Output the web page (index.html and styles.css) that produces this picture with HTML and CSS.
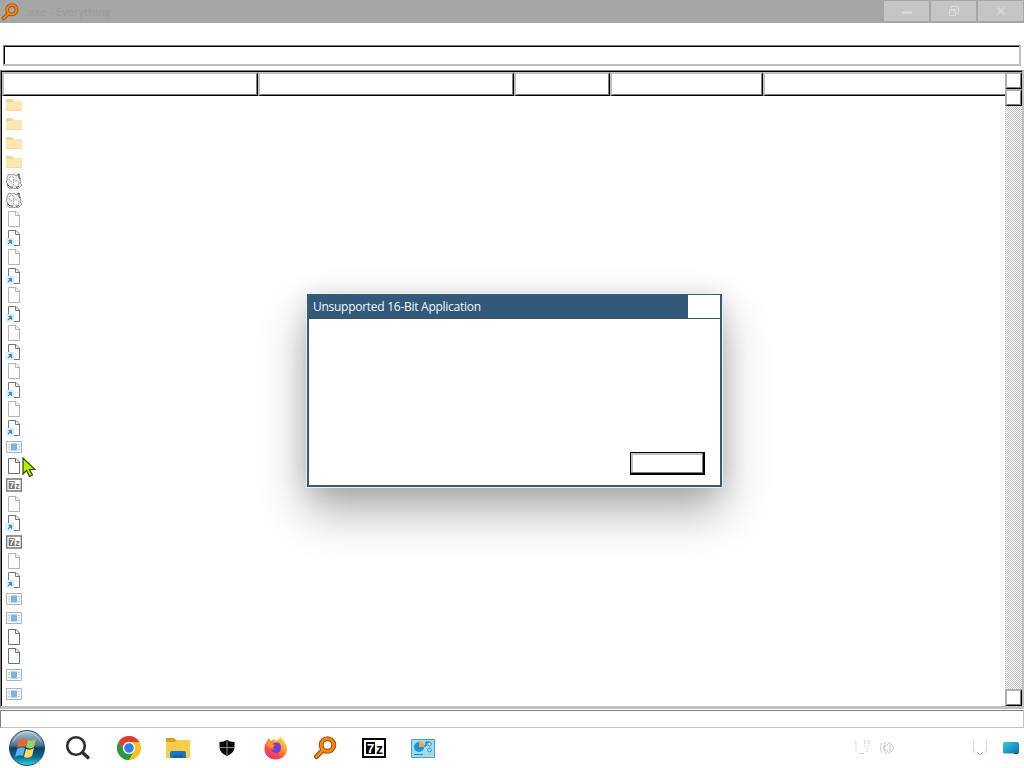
FILE: index.html
```
<!DOCTYPE html>
<html lang="en">
<head>
    <meta charset="UTF-8">
    <title>Everything</title>
    <link rel="stylesheet" href="styles.css">
</head>
<body>
    <svg class="defs" width="0" height="0">
        <defs>
            <linearGradient id="orb-fill" x1="0" y1="0" x2="0" y2="1">
                <stop offset="0" stop-color="#b5c5cf"/>
                <stop offset="0.42" stop-color="#4b7895"/>
                <stop offset="0.5" stop-color="#123e62"/>
                <stop offset="0.75" stop-color="#08698f"/>
                <stop offset="1" stop-color="#35d5ea"/>
            </linearGradient>
            <linearGradient id="fox-fill" x1="0.9" y1="0" x2="0.2" y2="1">
                <stop offset="0" stop-color="#fff04a"/>
                <stop offset="0.4" stop-color="#ff9a2c"/>
                <stop offset="0.7" stop-color="#ff4c45"/>
                <stop offset="1" stop-color="#e9288c"/>
            </linearGradient>
            <linearGradient id="desk-fill" x1="0" y1="0" x2="1" y2="1">
                <stop offset="0" stop-color="#38c8df"/>
                <stop offset="1" stop-color="#0870b4"/>
            </linearGradient>
            <symbol id="folder" viewBox="0 0 16 16">
                <path d="M0 2h6l2 2h7v3H0z" fill="#ecd9a0"/>
                <path d="M0 5h6l2-1h8v10H0z" fill="#fbe8b0"/>
                <path d="M0 13.500h16" stroke="#f0dc9f"/>
            </symbol>
            <symbol id="gears" viewBox="0 0 16 16">
                <path d="M1 4l2-3 3 1 2-1 2 2 3-2v4l2 3-1 2 2 2-3 3-3 1-3-1-3 1-3-3 1-2-2-2 1-2z" fill="#eee" stroke="#999"/>
                <circle cx="5.500" cy="6" r="2.500" fill="#fff" stroke="#999" stroke-dasharray="2 1"/>
                <circle cx="10" cy="10.500" r="2.800" fill="#fff" stroke="#999" stroke-dasharray="2 1"/>
                <path d="M11 2l2-1v4l2 1M1 11l3 3h3M13 13l-3 2" fill="none" stroke="#555"/>
            </symbol>
            <symbol id="page" viewBox="0 0 16 16">
                <path d="M2.500 .5h7.500l3.500 3.500v11.500h-11z" fill="#fdfdfd" stroke="currentColor"/>
                <path d="M9.500 .5v4h4" fill="none" stroke="currentColor"/>
            </symbol>
            <symbol id="link" viewBox="0 0 16 16">
                <path d="M2.500 8V.5h7.500l3.500 3.500v11.500H8" fill="none" stroke="#777"/>
                <path d="M9.500 .5v4h4" fill="none" stroke="#777"/>
                <path d="M.5 8.500h7v7h-7z" fill="#f2f9ff" stroke="#d4eafa"/>
                <path d="M2 14l3-3M2.500 10.500h3V14" fill="none" stroke="#3b86c4" stroke-width="1.300"/>
            </symbol>
            <symbol id="exe" viewBox="0 0 16 16">
                <path d="M.5 2.500h15v11H.5z" fill="#f6fafc" stroke="#a9b4bb"/>
                <path d="M5 4.500h6v7H5z" fill="#7fb3da"/>
                <path d="M2 5.500h2M2 8h2M2 10.500h2M12 5.500h2M12 8h2M12 10.500h2" stroke="#b1cddd"/>
            </symbol>
            <symbol id="sevenzip" viewBox="0 0 24 20">
                <path d="M1 1h22v18H1z" fill="#fff" stroke="currentColor" stroke-width="2"/>
                <path d="M4 4h9v12H4z" fill="currentColor"/>
                <text class="zip-seven" x="5" y="14.500">7</text>
                <text class="zip-z" x="14" y="16">z</text>
            </symbol>
            <symbol id="everything" viewBox="0 0 24 24">
                <path d="M9.500 14.500l-6 6" stroke="#a65208" stroke-width="5" stroke-linecap="round"/>
                <circle cx="14.500" cy="9" r="6.300" fill="none" stroke="#a65208" stroke-width="5"/>
                <path d="M10 14l-6.500 6.500" stroke="#f28618" stroke-width="2.800" stroke-linecap="round"/>
                <circle cx="14.500" cy="9" r="6.300" fill="none" stroke="#f28618" stroke-width="2.800"/>
            </symbol>
        </defs>
    </svg>

    <div class="window">
        <div class="titlebar">
            <svg class="app-icon"><use href="#everything"/></svg>
            <span class="title">.exe - Everything</span>
            <div class="caption-buttons">
                <div class="caption"><svg width="12" height="12"><path d="M1 7.500h10" stroke="#ddd" stroke-width="2"/></svg></div>
                <div class="caption"><svg width="12" height="12"><path d="M3.500 3V1.500h7v7H9M1.500 4.500h6v6h-6zM1 6h7" fill="none" stroke="#ddd"/></svg></div>
                <div class="caption"><svg width="12" height="12"><path d="M2.500 2.500l7 7M9.500 2.500l-7 7" stroke="#d8d8d8" stroke-width="1.800"/></svg></div>
            </div>
        </div>
        <div class="menubar"></div>
        <div class="search"></div>

        <div class="list">
            <div class="list-main">
                <div class="columns">
                    <div class="column"></div>
                    <div class="column"></div>
                    <div class="column"></div>
                    <div class="column"></div>
                    <div class="column"></div>
                </div>
                <div class="rows" id="rows"></div>
            </div>
            <div class="scrollbar">
                <div class="scroll-button"></div>
                <div class="scroll-button"></div>
                <div class="track"></div>
                <div class="scroll-button down"></div>
            </div>
        </div>
        <div class="statusbar"></div>
    </div>

    <div class="taskbar">
        <div class="start">
            <svg width="38" height="38" viewBox="0 0 38 38">
                <circle cx="19" cy="19" r="17.500" fill="url(#orb-fill)" stroke="#28506c"/>
                <path d="M11 11q4-3 8-1l-2 8q-4-2-8 1z" fill="#ec6730"/>
                <path d="M20 11q4 2 8-1l-2 8q-4 3-8 0z" fill="#a5cf55"/>
                <path d="M9 20q4-3 8-1l-2 8q-4-2-8 1z" fill="#58b5ec"/>
                <path d="M18 20q4 2 8-1l-2 8q-4 3-8 1z" fill="#fedb58"/>
                <path d="M5 13Q11 3 19 3t14 10" fill="none" stroke="#dce7ed" stroke-opacity=".6"/>
            </svg>
        </div>
        <div class="task find">
            <svg width="26" height="26" viewBox="0 0 26 26"><circle cx="11" cy="11" r="8.800" fill="none" stroke="#2d2d2d" stroke-width="2.600"/><path d="M17.500 17.500l6.500 6" stroke="#2d2d2d" stroke-width="3.200"/></svg>
        </div>
        <div class="task">
            <svg width="24" height="24" viewBox="0 0 24 24">
                <circle cx="12" cy="12" r="12" fill="#fbc116"/>
                <path d="M1.600 6A12 12 0 0 1 22.400 6H12L6.800 15z" fill="#e33b2e"/>
                <path d="M1.600 6A12 12 0 0 0 12 24l5.200-9L12 17.500 6.800 15z" fill="#279847"/>
                <circle cx="12" cy="12" r="6.200" fill="#fff"/>
                <circle cx="12" cy="12" r="4.800" fill="#397de8"/>
            </svg>
        </div>
        <div class="task">
            <svg width="24" height="22" viewBox="0 0 24 22">
                <path d="M0 1h8l2 2h14v5H0z" fill="#dc9f19"/>
                <path d="M0 5h9l2-2h13v18H0z" fill="#fccd48"/>
                <path d="M4 21v-5q0-2 2-2h12q2 0 2 2v5z" fill="#1875c8"/>
                <path d="M7 18h10v3H7z" fill="#1163aa"/>
            </svg>
        </div>
        <div class="task">
            <svg width="16" height="16" viewBox="0 0 16 16"><path d="M8 0q3 2 7.500 2v5q0 6-7.500 9Q.5 13 .5 7V2Q5 2 8 0z" fill="#080808"/><path d="M8 1v14M1 7.500h14" stroke="#aaa" stroke-width=".8"/></svg>
        </div>
        <div class="task">
            <svg width="24" height="24" viewBox="0 0 24 24">
                <path d="M3 5l2-3 2 3 3-2 2 2 3-2 1-3q2 3 4 5 3 4 3 8c0 6-5 10.500-11.300 10.500S.5 19 .5 13q0-5 2.500-8z" fill="url(#fox-fill)"/>
                <path d="M10 7q7-2 7 5 0 5-5 5-4 0-5-4 2 1 4 0l-3-2q0-3 2-4z" fill="#7540d5"/>
                <path d="M2 6q3 0 6 2l3 1-3 3-4-1z" fill="#ff9a24"/>
            </svg>
        </div>
        <div class="task"><svg width="24" height="24"><use href="#everything"/></svg></div>
        <div class="task"><svg class="zip-task" width="24" height="20"><use href="#sevenzip"/></svg></div>
        <div class="task">
            <svg width="24" height="19" viewBox="0 0 24 19">
                <path d="M.5 .5h23v18H.5z" fill="#98def7" stroke="#4d9fca"/>
                <circle cx="8" cy="8" r="5" fill="#258fd3"/>
                <path d="M8 8V2a6 6 0 0 1 5 6z" fill="#f9a145"/>
                <path d="M13 7h2V3h3" fill="none" stroke="#24516c"/>
                <circle cx="18.500" cy="5" r="1.800" fill="#dff7ff" stroke="#2e83ad"/>
                <circle cx="18.500" cy="11" r="1.800" fill="#dff7ff" stroke="#2e83ad"/>
                <path d="M3 15.500h9" stroke="#217eb4"/><path d="M12 15.500h9" stroke="#e2c784"/>
            </svg>
        </div>
        <div class="tray">
            <svg width="18" height="16" viewBox="0 0 18 16"><path d="M2 2h2v10M7 13.500h5M12 1h5v4l-2 3v4M13 2v5" fill="none" stroke="#ccc" stroke-dasharray="2 1"/></svg>
            <svg class="volume" width="16" height="16" viewBox="0 0 16 16"><path d="M5 6h2l4-4v12l-4-4H5zM12 4l3 4-3 4M3 3q-3 5 0 10M7 2q-4 6 0 12" fill="none" stroke="#bbb" stroke-dasharray="2 .7"/></svg>
            <svg class="notify" width="16" height="16" viewBox="0 0 16 16"><path d="M3 1H1.500v11H3M13 1h1.500v11H13" fill="none" stroke="#d4d4d4"/><path d="M5 12l3 3 3-3" fill="none" stroke="#aaa"/></svg>
            <svg class="desktop" width="16" height="14" viewBox="0 0 16 14"><rect y="1" width="16" height="11.500" rx="1.500" fill="url(#desk-fill)"/><path d="M11 12.500h4" stroke="#17445d"/></svg>
        </div>
    </div>

    <div class="dialog">
        <div class="dialog-title">
            <span>Unsupported 16-Bit Application</span>
            <div class="dialog-close"></div>
        </div>
        <div class="dialog-body">
            <div class="dialog-button"></div>
        </div>
    </div>

    <svg class="cursor" width="14" height="21" viewBox="0 0 14 21"><path d="M1 1v16l3.500-3.500 3 6 3-1.500-3-5.500H13z" fill="#b4f000" stroke="#34420c" stroke-width="1.200"/></svg>

    <script>
        var files = [
            'folder', 'folder', 'folder', 'folder', 'gears', 'gears',
            'page', 'link', 'page', 'link', 'page', 'link', 'page', 'link', 'page', 'link', 'page', 'link',
            'exe', 'page dark', 'sevenzip', 'page', 'link', 'sevenzip', 'page', 'link',
            'exe', 'exe', 'page dark', 'page dark', 'exe', 'exe'
        ];
        var html = '';
        for (var i = 0; i < files.length; i++) {
            html += `<div class="row"><svg class="file ${files[i]}"><use href="#${files[i].split(' ')[0]}"/></svg></div>`;
        }
        document.getElementById('rows').innerHTML = html;
    </script>
</body>
</html>
```
FILE: styles.css
```
* {
    box-sizing: border-box;
}
body {
    margin: 0;
    width: 1024px;
    height: 768px;
    overflow: hidden;
    background-color: #fff;
    font-family: "Open Sans", "Noto Sans", sans-serif;
}
svg {
    display: block;
    flex: none;
}
.defs {
    position: absolute;
}
.window {
    height: 728px;
    display: flex;
    flex-direction: column;
}
.titlebar {
    height: 23px;
    display: flex;
    align-items: center;
    padding-left: 1px;
    background-color: #a6a6a6;
}
.app-icon {
    width: 18px;
    height: 18px;
}
.title {
    margin-left: 6px;
    font-size: 11px;
    letter-spacing: 0.1px;
    color: #9b9b9b;
    flex: 1;
}
.caption-buttons {
    display: flex;
    gap: 2px;
    height: 23px;
    padding: 1px 1px 2px 0;
}
.caption {
    width: 45px;
    display: flex;
    align-items: center;
    justify-content: center;
    background-color: #c5c5c5;
}
.menubar {
    height: 22px;
}
.search {
    height: 21px;
    margin: 0 3px;
    border: 2px solid #c0c0c0;
    border-top: 1px solid #808080;
    border-left: 1px solid #808080;
    box-shadow: inset 1px 1px #000;
}
.list {
    height: 639px;
    margin-top: 4px;
    display: flex;
    border: 1px solid #808080;
    border-right: 2px solid #c0c0c0;
    border-bottom: 3px solid #c0c0c0;
    box-shadow: inset 1px 1px #000;
    padding: 1px 0 0 1px;
}
.list-main {
    flex: 1;
}
.columns {
    height: 24px;
    display: grid;
    grid-template-columns: 256px 256px 96px 153px 1fr;
}
.column {
    border: 2px solid #c0c0c0;
    border-right: 1px solid #000;
    border-bottom: 1px solid #000;
    box-shadow: inset -1px -1px #808080;
}
.column:last-child {
    border-right: none;
    box-shadow: inset 0 -1px #808080;
}
.row {
    height: 19px;
    padding: 1px 0 0 4px;
}
.file {
    width: 16px;
    height: 16px;
}
.page {
    color: #b4b4b4;
}
.dark {
    color: #707070;
}
.sevenzip {
    color: #777;
}
.zip-task {
    color: #080808;
}
.zip-seven {
    font: bold 13px "Liberation Sans", sans-serif;
    fill: #fff;
}
.zip-z {
    font: bold 14px "Liberation Sans", sans-serif;
    fill: currentColor;
}
.scrollbar {
    width: 17px;
    display: flex;
    flex-direction: column;
}
.scroll-button {
    height: 17px;
    border: 2px solid #b0b0b0;
    border-right: 1px solid #000;
    border-bottom: 1px solid #000;
    box-shadow: inset -1px -1px #808080;
}
.track {
    flex: 1;
    background: repeating-conic-gradient(#c0c0c0 0 25%, #fff 0 50%) 0 0 / 2px 2px;
}
.statusbar {
    height: 18px;
    margin-top: 1px;
    border: 1px solid #c0c0c0;
    border-top-color: #808080;
    border-left-color: #808080;
}
.taskbar {
    height: 40px;
    display: flex;
    align-items: center;
    padding-left: 8px;
}
.start {
    width: 45px;
}
.task {
    width: 49px;
    display: flex;
    justify-content: center;
}
.find {
    margin-right: 2px;
}
.tray {
    display: flex;
    align-items: center;
    margin-left: auto;
    padding-right: 5px;
}
.volume {
    margin-left: 9px;
}
.notify {
    margin-left: 77px;
}
.desktop {
    margin-left: 15px;
}
.dialog {
    position: absolute;
    left: 307px;
    top: 294px;
    width: 415px;
    height: 193px;
    display: flex;
    flex-direction: column;
    background-color: #fff;
    border: 2px solid #3d596b;
    border-top-width: 1px;
    box-shadow: 0 0 0 1px #e0f4f6, 0 24px 44px rgba(0, 0, 0, 0.32), 0 2px 24px rgba(0, 0, 0, 0.12);
}
.dialog-title {
    height: 24px;
    display: flex;
    align-items: center;
    padding-left: 4px;
    font-size: 12px;
    letter-spacing: -0.27px;
    color: #effaff;
    background-color: #325979;
    border-bottom: 1px solid #46535f;
}
.dialog-close {
    width: 32px;
    height: 23px;
    margin-left: auto;
    background-color: #fff;
}
.dialog-body {
    flex: 1;
    display: flex;
    justify-content: flex-end;
    align-items: flex-end;
    padding: 0 15px 10px 0;
}
.dialog-button {
    width: 75px;
    height: 23px;
    border: 1px solid #000;
    border-right-width: 2px;
    border-bottom-width: 2px;
    box-shadow: inset -1px -1px #808080, inset 2px 2px #c0c0c0;
}
.cursor {
    position: absolute;
    left: 22px;
    top: 457px;
}
```
